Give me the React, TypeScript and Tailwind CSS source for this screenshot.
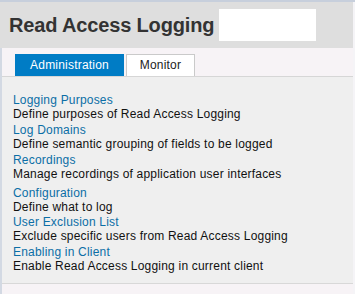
import React from 'react';

const items = [
  { title: 'Logging Purposes', desc: 'Define purposes of Read Access Logging', cls: '', dcls: 'pb-[2px]' },
  { title: 'Log Domains', desc: 'Define semantic grouping of fields to be logged', cls: '', dcls: 'pb-[2px]' },
  { title: 'Recordings', desc: 'Manage recordings of application user interfaces', cls: '', dcls: 'pb-[2px]' },
  { title: 'Configuration', desc: 'Define what to log', cls: 'pt-[3px]', dcls: 'pb-[1px]' },
  { title: 'User Exclusion List', desc: 'Exclude specific users from Read Access Logging', cls: '', dcls: 'pb-[2px]' },
  { title: 'Enabling in Client', desc: 'Enable Read Access Logging in current client', cls: '', dcls: 'pb-[2px]' },
];

export default function App() {
  return (
    <div className="w-[355px] h-[294px] overflow-hidden bg-[#f5f4f7] font-['Liberation_Sans',Arial,sans-serif] flex flex-col">
      <div className="h-[2px] bg-[#c7cfdc] shrink-0" />
      <div className="mr-[2px] h-[46px] bg-[#dedede] flex items-start pt-[7px] pl-[9px] gap-[5px] shrink-0">
        <h1 className="text-[20px] leading-[32px] font-bold text-[#333] tracking-[-0.15px]">Read Access Logging</h1>
        <div className="w-[97px] h-[32px] bg-white" />
      </div>
      <div className="flex-1 mr-[2px] border-l-2 border-[#d3d9e3] flex flex-col">
        <div className="h-[29px] bg-[#f7f3f6] border-b border-[#d6d6d6] flex items-end gap-[2px] pl-[13px] shrink-0">
          <div className="w-[109px] h-[22px] bg-[#007cc5] text-white text-[12px] leading-[22px] tracking-[0.2px] text-center">
            Administration
          </div>
          <div className="w-[69px] h-[22px] bg-white border border-b-0 border-[#cacaca] text-[#222] text-[12px] leading-[21px] tracking-[0.2px] text-center">
            Monitor
          </div>
        </div>
        <div className="bg-[#efefef] border-b border-[#d8d8d8] pt-[16px] pl-[11px] pb-[8px] text-[12px] leading-[14px] tracking-[0.2px]">
          {items.map((it) => (
            <div key={it.title} className={it.cls}>
              <div className="text-[#0b6ea6]">{it.title}</div>
              <div className={`text-[#111] ${it.dcls}`}>{it.desc}</div>
            </div>
          ))}
        </div>
        <div className="flex-1 bg-[#f7f3f6]" />
      </div>
    </div>
  );
}
